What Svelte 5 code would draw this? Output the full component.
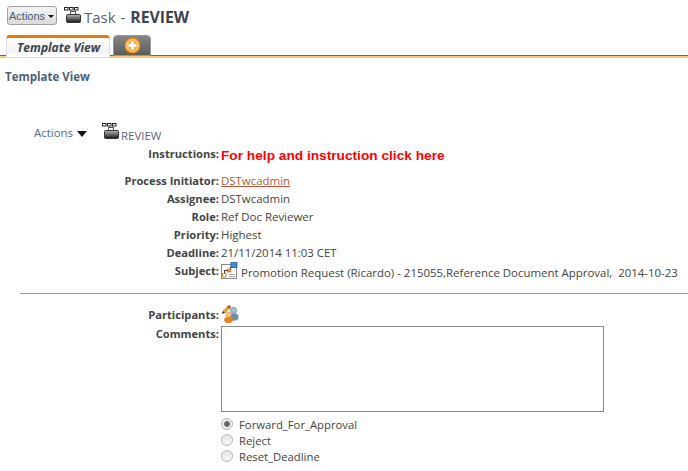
<script>
    const rows = [
        { label: 'Assignee:', value: 'DSTwcadmin' },
        { label: 'Role:', value: 'Ref Doc Reviewer' },
        { label: 'Priority:', value: 'Highest' },
        { label: 'Deadline:', value: '21/11/2014 11:03 CET' }
    ];
    const outcomes = ['Forward_For_Approval', 'Reject', 'Reset_Deadline'];
</script>

{#snippet briefcase(id)}
    <svg class="case" width="18" height="16" viewBox="0 0 18 16">
        <defs>
            <linearGradient id={id} x1="0" y1="0" x2="0" y2="1">
                <stop offset="0" stop-color="#b8b8b8" />
                <stop offset="0.45" stop-color="#6e6e6e" />
                <stop offset="1" stop-color="#161616" />
            </linearGradient>
        </defs>
        <g fill="#fff" stroke="#222" stroke-width="1">
            <rect x="0.5" y="0.5" width="3.5" height="2.5" />
            <rect x="5.5" y="0.5" width="3.5" height="2.5" />
            <rect x="10.5" y="0.5" width="3.5" height="2.5" />
        </g>
        <rect x="6.5" y="4.5" width="5" height="3" fill="none" stroke="#555" />
        <rect x="2.5" y="7.5" width="14" height="8" rx="1" fill="url(#{id})" stroke="#333" />
    </svg>
{/snippet}

<div class="page">
    <header class="title">
        <button type="button" class="actions-btn">Actions<span class="caret"></span></button>
        {@render briefcase('case-a')}
        <h1>Task - <b>REVIEW</b></h1>
    </header>

    <nav class="tabs">
        <div class="tab active">Template View</div>
        <div class="tab add">
            <svg width="17" height="17" viewBox="0 0 17 17">
                <circle cx="8.5" cy="8.5" r="8" fill="#ee8a14" />
                <circle cx="8.5" cy="8.5" r="6" fill="#f6b04e" stroke="#fde3bb" stroke-width="1" />
                <path d="M8.5 4.5v8M4.5 8.5h8" stroke="#fff" stroke-width="2.6" />
            </svg>
        </div>
    </nav>

    <h2>Template View</h2>

    <div class="task-head">
        <span class="task-actions">Actions<span class="caret big"></span></span>
        {@render briefcase('case-b')}
        <span class="task-name">REVIEW</span>
    </div>

    <div class="fields">
        <div class="row instructions">
            <span class="label">Instructions:</span>
            <span class="help">For help and instruction click here</span>
        </div>
        <div class="row">
            <span class="label">Process Initiator:</span>
            <a href="#top">DSTwcadmin</a>
        </div>
        {#each rows as row}
            <div class="row">
                <span class="label">{row.label}</span>
                <span>{row.value}</span>
            </div>
        {/each}
        <div class="row">
            <span class="label">Subject:</span>
            <span class="subject">
                <svg width="17" height="17" viewBox="0 0 17 17">
                    <rect x="0.5" y="2.5" width="15" height="14" fill="#fff" stroke="#8a8a8a" />
                    <rect x="10" y="0.5" width="6" height="5" fill="#3d8fd6" stroke="#1c5c9c" stroke-width="0.8" />
                    <path d="M3.5 12V8.5h6V5" fill="none" stroke="#333" />
                    <rect x="1.5" y="11.5" width="3.5" height="3.5" fill="#fff" stroke="#e08a1e" />
                    <rect x="6.5" y="7" width="3.5" height="3" fill="#f0a030" stroke="#b56a10" stroke-width="0.6" />
                    <path d="M8 12.5h6M8 14.5h6" stroke="#aaa" />
                </svg>
                <span class="subject-text">Promotion Request (Ricardo) - 215055,Reference Document Approval,&nbsp; 2014-10-23</span>
            </span>
        </div>
    </div>

    <hr />

    <div class="fields">
        <div class="row participants">
            <span class="label">Participants:</span>
            <svg width="18" height="18" viewBox="0 0 18 18">
                <circle cx="12.5" cy="5.5" r="3.2" fill="#a9bccb" stroke="#6d8494" stroke-width="0.6" />
                <ellipse cx="13" cy="12" rx="4.6" ry="3.8" fill="#6f8ea6" />
                <circle cx="7.5" cy="9.8" r="2.8" fill="#f3c587" stroke="#c8883a" stroke-width="0.5" />
                <ellipse cx="7.5" cy="15" rx="4.4" ry="3" fill="#e8811a" />
                <path d="M2 6 7 1l2 2-5 5z" fill="#e9a92c" stroke="#8a5a10" stroke-width="0.4" />
                <path d="M6.5 1.5 8 0l2 2-1.5 1.5z" fill="#c62828" />
                <path d="M2 6 .5 8.8 4 8z" fill="#333" />
            </svg>
        </div>
        <div class="row comments">
            <span class="label">Comments:</span>
            <textarea aria-label="Comments"></textarea>
        </div>
        <div class="row radios">
            <span></span>
            <div class="radio-list">
                {#each outcomes as outcome, i}
                    <label>
                        <input type="radio" name="outcome" checked={i === 0} />
                        {outcome}
                    </label>
                {/each}
            </div>
        </div>
    </div>
</div>

<style>
    :global(body) {
        margin: 0;
        background: #fff;
    }

    .page {
        width: 688px;
        height: 471px;
        overflow: hidden;
        font-family: "Open Sans", "Liberation Sans", sans-serif;
        font-size: 11.45px;
        color: #444;
    }

    .title {
        display: flex;
        align-items: center;
        height: 35px;
        padding-left: 7px;
        box-sizing: border-box;
    }

    .actions-btn {
        width: 50px;
        height: 19px;
        padding: 0 0 0 1px;
        margin-right: 7px;
        margin-bottom: 4px;
        border: 1px solid #a0a0a0;
        border-radius: 3px;
        background: linear-gradient(#f4f4f4, #dcdcdc);
        color: #4a5a70;
        font: 11px "Liberation Sans", sans-serif;
        text-align: left;
    }

    .caret {
        display: inline-block;
        margin-left: 3px;
        vertical-align: middle;
        border-left: 3px solid transparent;
        border-right: 3px solid transparent;
        border-top: 3px solid #111;
    }

    .caret.big {
        margin-left: 4px;
        border-left-width: 5px;
        border-right-width: 5px;
        border-top-width: 6px;
    }

    .case {
        flex: none;
    }

    .title .case {
        margin-bottom: 5px;
    }

    .task-head .case {
        margin-bottom: 3px;
    }

    h1 {
        margin: 0 0 2px 2px;
        font-size: 15px;
        font-weight: 400;
        word-spacing: 1px;
        color: #55637a;
    }

    h1 b {
        font-size: 15.8px;
        color: #3c4450;
    }

    .tabs {
        display: flex;
        align-items: flex-end;
        height: 21px;
        padding-left: 6px;
        gap: 3px;
        border-bottom: 2px solid #f4c97a;
        box-shadow: inset 0 -1px 0 #666;
    }

    .tab {
        box-sizing: border-box;
        border-radius: 4px 4px 0 0;
    }

    .tab.active {
        width: 104px;
        height: 23px;
        margin-bottom: -2px;
        padding-left: 10px;
        border: 1px solid #ddd;
        border-top: 3px solid #ec7a00;
        background: linear-gradient(#fff, #f2f2f2 70%, #fff);
        font-size: 12px;
        font-weight: 700;
        font-style: italic;
        line-height: 19px;
        color: #3c4450;
    }

    .tab.add {
        display: flex;
        justify-content: center;
        align-items: center;
        width: 38px;
        height: 21px;
        border: 1px solid #9a9a9a;
        background: linear-gradient(#858585, #5c5c5c);
    }

    h2 {
        margin: 11px 0 0 5px;
        font-size: 11.5px;
        font-weight: 700;
        line-height: 16px;
        color: #4d6178;
    }

    .task-head {
        display: flex;
        align-items: flex-end;
        height: 20px;
        margin: 37px 0 0 34px;
    }

    .task-actions {
        width: 68px;
        margin-bottom: 2px;
        color: #4d6d94;
    }

    .task-name {
        margin-left: 1px;
        margin-bottom: -1px;
        color: #5a6a80;
    }

    .row {
        display: grid;
        grid-template-columns: 219px 1fr;
        column-gap: 2px;
        align-items: center;
        height: 18px;
        white-space: nowrap;
    }

    .label {
        text-align: right;
        font-size: 11.15px;
        font-weight: 700;
    }

    .instructions {
        height: 22px;
        margin-bottom: 7px;
    }

    .help {
        margin-top: 4px;
        color: #f00;
        font-family: "Liberation Sans", sans-serif;
        font-size: 13.7px;
        font-weight: 700;
    }

    a {
        color: #b5583a;
    }

    .subject {
        display: flex;
        align-items: center;
        gap: 3px;
    }

    .subject-text {
        margin-top: 4px;
    }

    hr {
        margin: 14px 0 11px 20px;
        border: 0;
        border-top: 1px solid #999;
    }

    .comments {
        height: auto;
        align-items: start;
    }

    .comments textarea {
        box-sizing: border-box;
        display: block;
        width: 383px;
        height: 86px;
        margin: 0;
        border: 1px solid #888;
        resize: none;
    }

    .participants {
        height: 17px;
        margin-bottom: 4px;
    }

    .radios {
        height: auto;
        margin-top: 4px;
    }

    .radio-list {
        display: flex;
        flex-direction: column;
        font-size: 11.3px;
    }

    .radio-list label {
        display: flex;
        align-items: center;
        gap: 6px;
        height: 16px;
    }

    .radio-list input {
        appearance: none;
        box-sizing: border-box;
        width: 12px;
        height: 12px;
        margin: 0;
        border: 1px solid #b4b4b4;
        border-radius: 50%;
        background: linear-gradient(#e4e4e4, #f6f6f6);
    }

    .radio-list input:checked {
        background: radial-gradient(circle, #666 0 2.5px, #ececec 3.2px);
    }
</style>
